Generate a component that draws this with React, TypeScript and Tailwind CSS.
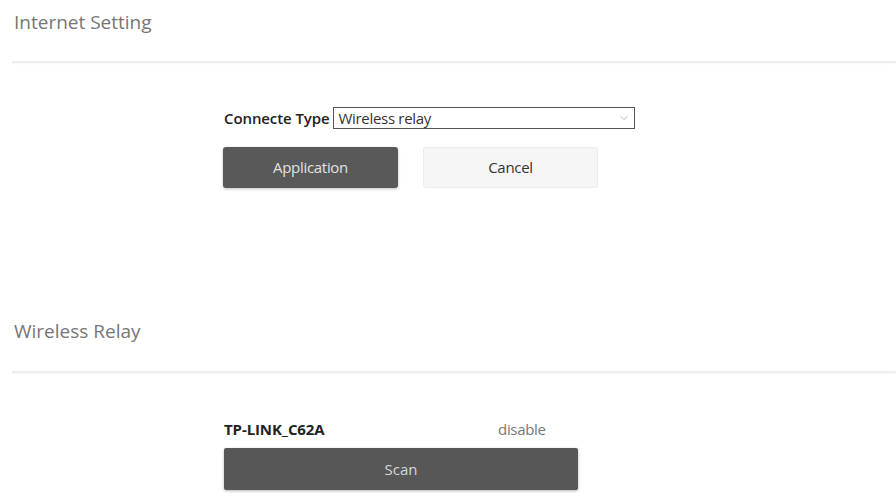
import { ChevronDown } from "lucide-react";

const SectionTitle = ({ children, className = "" }: { children: string; className?: string }) => (
  <div className={`pl-[14px] h-[22px] leading-[22px] text-[19px] text-[#767676] ${className}`}>{children}</div>
);

const Divider = ({ className = "" }: { className?: string }) => (
  <div className={`ml-[12px] h-[2px] bg-[#eeeeee] shadow-[0_1px_2px_rgba(0,0,0,0.04)] ${className}`} />
);

export default function App() {
  return (
    <div className="w-[896px] h-[499px] bg-white overflow-hidden font-['Open_Sans',sans-serif]">
      <SectionTitle className="mt-[11px]">Internet Setting</SectionTitle>
      <Divider className="mt-[28px]" />

      <div className="pl-[224px] mt-[44px]">
        <div className="flex items-center gap-[4px] h-[22px]">
          <span className="text-[15px] font-semibold text-[#222] tracking-[-0.1px]">Connecte Type</span>
          <div className="flex items-center justify-between w-[302px] h-[22px] border border-[#555] px-[4px] text-[15px] text-[#333] tracking-[-0.3px]">
            <span>Wireless relay</span>
            <ChevronDown className="w-[12px] h-[12px] text-[#999]" strokeWidth={1.5} />
          </div>
        </div>
        <div className="flex gap-[25px] mt-[18px] -ml-[1px]">
          <button className="w-[175px] h-[41px] rounded-[3px] bg-[#595959] text-[#e2e2e2] text-[15px] tracking-[-0.3px] shadow-[0_1px_3px_rgba(0,0,0,0.25)]">
            Application
          </button>
          <button className="w-[175px] h-[41px] rounded-[3px] bg-[#f6f6f6] border border-[#ececec] text-[#333] text-[15px] tracking-[-0.3px]">
            Cancel
          </button>
        </div>
      </div>

      <SectionTitle className="mt-[132px]">Wireless Relay</SectionTitle>
      <Divider className="mt-[29px]" />

      <div className="pl-[224px] mt-[45px]">
        <div className="grid grid-cols-[274px_auto] h-[18px] items-center">
          <span className="text-[15px] font-bold text-[#222] tracking-[-0.1px]">TP-LINK_C62A</span>
          <span className="text-[15px] text-[#777] tracking-[-0.3px]">disable</span>
        </div>
        <button className="mt-[12px] w-[354px] h-[42px] rounded-[2px] bg-[#575757] text-[#d6d6d6] text-[15px] shadow-[0_1px_3px_rgba(0,0,0,0.3)]">
          Scan
        </button>
      </div>
    </div>
  );
}
